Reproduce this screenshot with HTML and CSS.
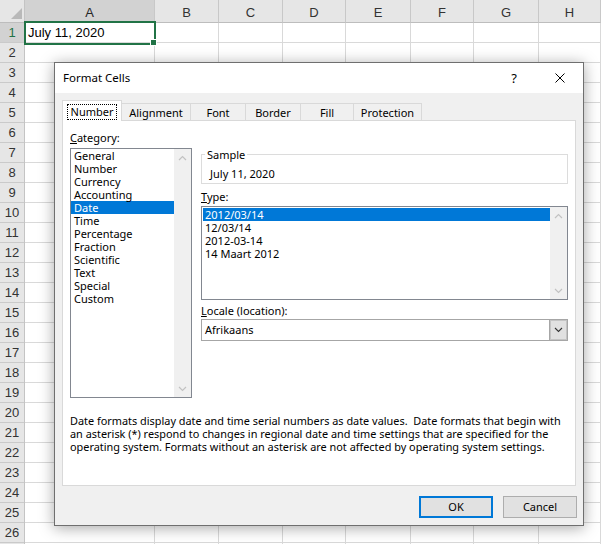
FILE: index.html
```html
<!DOCTYPE html>
<html>
<head>
<meta charset="utf-8">
<link rel="stylesheet" href="styles.css">
</head>
<body>
<div class="sheet">
  <div class="rowhdr">
    <div class="corner"><svg width="25" height="23" viewBox="0 0 25 23"><polygon points="11,19 22,19 22,8" fill="#b9b9b9"/></svg></div>
    <div class="rn rn-sel">1</div><div class="rn">2</div><div class="rn">3</div><div class="rn">4</div><div class="rn">5</div><div class="rn">6</div><div class="rn">7</div><div class="rn">8</div><div class="rn">9</div><div class="rn">10</div><div class="rn">11</div><div class="rn">12</div><div class="rn">13</div><div class="rn">14</div><div class="rn">15</div><div class="rn">16</div><div class="rn">17</div><div class="rn">18</div><div class="rn">19</div><div class="rn">20</div><div class="rn">21</div><div class="rn">22</div><div class="rn">23</div><div class="rn">24</div><div class="rn">25</div><div class="rn">26</div><div class="rn"></div>
  </div>
  <div class="col col-a"><div class="ch ch-sel">A</div><div class="cells"><div class="cell active">July 11, 2020</div></div></div>
  <div class="col col-b"><div class="ch">B</div><div class="cells"></div></div>
  <div class="col col-c"><div class="ch">C</div><div class="cells"></div></div>
  <div class="col col-d"><div class="ch">D</div><div class="cells"></div></div>
  <div class="col col-e"><div class="ch">E</div><div class="cells"></div></div>
  <div class="col col-f"><div class="ch">F</div><div class="cells"></div></div>
  <div class="col col-g"><div class="ch">G</div><div class="cells"></div></div>
  <div class="col col-h"><div class="ch">H</div><div class="cells"></div></div>
</div>

<div class="dialog">
  <div class="titlebar">
    <div class="title">Format Cells</div>
    <div class="tb-btn help">?</div>
    <div class="tb-btn close"><svg width="10" height="10" viewBox="0 0 10 10"><path d="M0.5 0.5 L9.5 9.5 M9.5 0.5 L0.5 9.5" stroke="#000" stroke-width="1" fill="none"/></svg></div>
  </div>
  <div class="tabs">
    <div class="tab tab-sel t-number"><span class="focus">Number</span></div>
    <div class="tab t-align">Alignment</div>
    <div class="tab t-font">Font</div>
    <div class="tab t-border">Border</div>
    <div class="tab t-fill">Fill</div>
    <div class="tab t-prot">Protection</div>
  </div>
  <div class="panel">
    <div class="top">
      <div class="left">
        <div class="label lbl-cat"><u>C</u>ategory:</div>
        <div class="listbox cat">
          <div class="items">
            <div class="item">General</div>
            <div class="item">Number</div>
            <div class="item">Currency</div>
            <div class="item">Accounting</div>
            <div class="item selected">Date</div>
            <div class="item">Time</div>
            <div class="item">Percentage</div>
            <div class="item">Fraction</div>
            <div class="item">Scientific</div>
            <div class="item">Text</div>
            <div class="item">Special</div>
            <div class="item">Custom</div>
          </div>
          <div class="scrollbar">
            <div class="sb-btn"><svg width="9" height="6" viewBox="0 0 9 6"><polyline points="1,5 4.5,1.5 8,5" fill="none" stroke="#c2c2c2" stroke-width="1.2"/></svg></div>
            <div class="sb-btn"><svg width="9" height="6" viewBox="0 0 9 6"><polyline points="1,1 4.5,4.5 8,1" fill="none" stroke="#c2c2c2" stroke-width="1.2"/></svg></div>
          </div>
        </div>
      </div>
      <div class="right">
        <fieldset class="sample">
          <legend>Sample</legend>
          <div class="sample-val">July 11, 2020</div>
        </fieldset>
        <div class="label lbl-type"><u>T</u>ype:</div>
        <div class="listbox type">
          <div class="items">
            <div class="item selected">2012/03/14</div>
            <div class="item">12/03/14</div>
            <div class="item">2012-03-14</div>
            <div class="item">14 Maart 2012</div>
          </div>
          <div class="scrollbar">
            <div class="sb-btn"><svg width="9" height="6" viewBox="0 0 9 6"><polyline points="1,5 4.5,1.5 8,5" fill="none" stroke="#c2c2c2" stroke-width="1.2"/></svg></div>
            <div class="sb-btn"><svg width="9" height="6" viewBox="0 0 9 6"><polyline points="1,1 4.5,4.5 8,1" fill="none" stroke="#c2c2c2" stroke-width="1.2"/></svg></div>
          </div>
        </div>
        <div class="label lbl-locale"><u>L</u>ocale (location):</div>
        <div class="combo">
          <div class="combo-val">Afrikaans</div>
          <div class="combo-btn"><svg width="9" height="6" viewBox="0 0 9 6"><polyline points="1,1 4.5,4.5 8,1" fill="none" stroke="#333" stroke-width="1.1"/></svg></div>
        </div>
      </div>
    </div>
    <div class="desc">Date formats display date and time serial numbers as date values.&nbsp; Date formats that begin with<br>an asterisk (*) respond to changes in regional date and time settings that are specified for the<br>operating system. Formats without an asterisk are not affected by operating system settings.</div>
  </div>
  <div class="buttons">
    <div class="btn btn-default">OK</div>
    <div class="btn">Cancel</div>
  </div>
</div>
</body>
</html>
```

FILE: styles.css
```css
*, *::before, *::after { box-sizing: border-box; }
body {
  margin: 0;
  width: 601px;
  height: 544px;
  overflow: hidden;
  position: relative;
  background: #fff;
  font-family: "Liberation Sans", Arial, sans-serif;
}

/* ---------- spreadsheet ---------- */
.sheet { display: flex; height: 544px; }
.rowhdr {
  flex: none;
  width: 25px;
  background: #e6e6e6;
  border-right: 1px solid #c4c4c4;
}
.corner { height: 23px; border-bottom: 1px solid #bdbdbd; }
.corner svg { display: block; }
.rn {
  height: 20px;
  border-bottom: 1px solid #cacaca;
  text-align: center;
  font-size: 13px;
  line-height: 19px;
  color: #333;
}
.rn-sel { background: #d2d2d2; color: #217346; }

.col { flex: none; }
.col-a { width: 130px; }
.col-b { width: 64px; }
.col-c { width: 64px; }
.col-d { width: 63px; }
.col-e { width: 65px; }
.col-f { width: 63px; }
.col-g { width: 65px; }
.col-h { flex: 1; }
.ch {
  height: 23px;
  background: #e6e6e6;
  border-right: 1px solid #c8c8c8;
  border-bottom: 1px solid #bdbdbd;
  text-align: center;
  font-size: 13px;
  padding-top: 4px;
  line-height: 17px;
  color: #333;
}
.ch-sel { background: #d2d2d2; color: #262626; }
.cells {
  height: 521px;
  border-right: 1px solid #d9d9d9;
  background: repeating-linear-gradient(to bottom, #fff 0, #fff 19px, #d9d9d9 19px, #d9d9d9 20px);
}
.cell {
  height: 19px;
  padding-left: 3px;
  font-size: 13px;
  line-height: 20px;
  color: #000;
  position: relative;
  white-space: nowrap;
}
.cell.active::after {
  content: "";
  position: absolute;
  left: -1px;
  top: -2px;
  width: 132px;
  height: 24px;
  border: 2px solid #217346;
}
.cell.active::before {
  content: "";
  position: absolute;
  left: 125px;
  top: 16px;
  width: 7px;
  height: 7px;
  background: #217346;
  border: 1px solid #fff;
  z-index: 2;
}

/* ---------- dialog ---------- */
.dialog {
  position: absolute;
  left: 54px;
  top: 62px;
  width: 530px;
  height: 464px;
  border: 1px solid #6f6f6f;
  background: #f0f0f0;
  box-shadow: 0 2px 14px rgba(0, 0, 0, 0.35);
  display: flex;
  flex-direction: column;
  font-family: "Noto Sans", "Open Sans", sans-serif;
  font-size: 11px;
  color: #000;
}
.titlebar {
  flex: none;
  height: 30px;
  background: #fff;
  display: flex;
  align-items: center;
  padding-left: 8px;
}
.title { flex: 1; font-size: 11.5px; margin-top: -1px; }
.tb-btn {
  width: 46px;
  height: 30px;
  display: flex;
  align-items: center;
  justify-content: center;
}
.help { font-size: 13px; }
.close svg { display: block; }

.tabs {
  flex: none;
  height: 20px;
  margin: 7px 0 0 7px;
  display: flex;
  align-items: flex-end;
  position: relative;
  z-index: 1;
}
.tab {
  height: 17px;
  margin-left: -1px;
  border: 1px solid #d9d9d9;
  border-bottom: none;
  background: #f0f0f0;
  text-align: center;
  padding-top: 1px;
  line-height: 15px;
  white-space: nowrap;
}
.tab:first-child { margin-left: 0; }
.tab-sel {
  height: 21px;
  margin-bottom: -1px;
  background: #fff;
  padding-top: 3px;
  position: relative;
  z-index: 2;
}
.focus {
  display: inline-block;
  border: 1px dotted #000;
  padding: 0 3px;
  line-height: 14px;
}
.t-number { width: 60px; }
.t-align { width: 70px; }
.t-font { width: 56px; }
.t-border { width: 56px; }
.t-fill { width: 54px; }
.t-prot { width: 69px; }

.panel {
  flex: none;
  height: 366px;
  margin: 0 7px;
  border: 1px solid #d9d9d9;
  background: #fff;
  padding: 9px 7px 0 7px;
}
.top { display: flex; gap: 9px; }
.left { width: 122px; flex: none; }
.right { width: 367px; flex: none; }
.label { line-height: 15px; height: 15px; margin-bottom: 2px; white-space: nowrap; }
.lbl-cat { margin-bottom: 3px; }
.label u { text-decoration-thickness: 1px; text-underline-offset: 1px; }

.listbox {
  display: flex;
  border: 1px solid #828790;
  background: #fff;
}
.listbox.cat { height: 250px; }
.listbox.type { height: 94px; }
.items { flex: 1; }
.type .items { padding: 1px 0 0 1px; }
.item {
  height: 13px;
  line-height: 13px;
  padding-left: 3px;
  white-space: nowrap;
}
.type .item { padding-left: 2px; }
.item.selected { background: #0078d7; color: #fff; }
.scrollbar {
  width: 17px;
  flex: none;
  background: #f0f0f0;
  display: flex;
  flex-direction: column;
  justify-content: space-between;
}
.sb-btn {
  height: 17px;
  display: flex;
  align-items: center;
  justify-content: center;
}
.sb-btn svg { display: block; }

.sample {
  margin: 17px 0 0 0;
  padding: 4px 8px 2px 8px;
  border: 1px solid #dcdcdc;
  min-inline-size: 0;
}
.sample legend {
  padding: 0 2px;
  margin-left: -5px;
  line-height: 15px;
}
.sample-val { line-height: 15px; height: 15px; }

.lbl-type { margin-top: 5px; margin-bottom: 2px; }
.lbl-locale { margin-top: 3px; margin-bottom: 1px; }

.combo {
  height: 22px;
  border: 1px solid #a6a6a6;
  display: flex;
  background: #fff;
}
.combo-val { flex: 1; padding-left: 3px; line-height: 20px; }
.combo-btn {
  width: 18px;
  background: #e1e1e1;
  border-left: 1px solid #a6a6a6;
  box-shadow: inset 0 0 0 1px #c4c4c4;
  display: flex;
  align-items: center;
  justify-content: center;
}
.combo-btn svg { display: block; }

.desc {
  margin-top: 16px;
  line-height: 13px;
  font-size: 10.9px;
  white-space: nowrap;
}

.buttons {
  flex: none;
  display: flex;
  justify-content: flex-end;
  gap: 10px;
  margin: 10px 6px 0 0;
}
.btn {
  width: 74px;
  height: 22px;
  background: #e1e1e1;
  border: 1px solid #adadad;
  text-align: center;
  line-height: 20px;
}
.btn-default { border: 2px solid #0078d7; line-height: 18px; }
```
